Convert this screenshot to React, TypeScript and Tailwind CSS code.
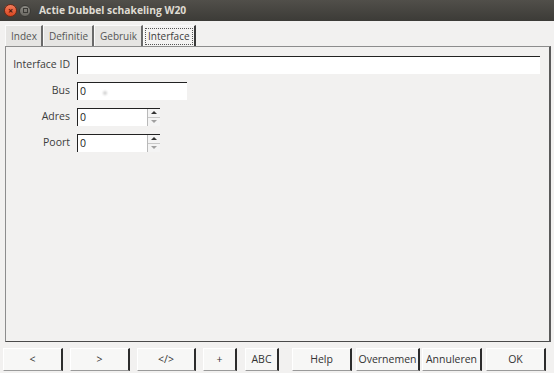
import React from "react";

const font = { fontFamily: '"Open Sans", "Noto Sans", sans-serif' };

function Spinner() {
  return (
    <div className="flex w-[13px] flex-col border-l border-[#b9b9b9] bg-[#f4f4f4]">
      <div className="flex h-1/2 items-center justify-center border-b border-[#c8c8c8]">
        <div className="h-0 w-0 border-x-[3px] border-b-[3px] border-x-transparent border-b-[#333]" />
      </div>
      <div className="flex h-1/2 items-center justify-center">
        <div className="h-0 w-0 border-x-[3px] border-t-[3px] border-x-transparent border-t-[#a0a0a0]" />
      </div>
    </div>
  );
}

function Field({ label, width, value, spin, dot }: { label: string; width: string; value?: string; spin?: boolean; dot?: boolean }) {
  return (
    <div className="flex h-[18px] items-center gap-[7px]">
      <div className="w-[64px] text-right text-[10.5px] text-[#3c3c3c]">{label}</div>
      <div className={`relative flex h-[18px] ${width} border-l border-t border-[#222] bg-white`}>
        <div className="flex-1 pl-[2px] text-[10.5px] leading-[17px] text-[#222]">{value}</div>
        {spin && <Spinner />}
        {dot && <div className="absolute left-[25px] top-[8px] h-[4px] w-[4px] rounded-full bg-[#cfcfcf] blur-[1px]" />}
      </div>
    </div>
  );
}

function Tab({ label, active }: { label: string; active?: boolean }) {
  if (active) {
    return (
      <div className="flex h-[21px] items-center border-l border-t border-[#fafafa] border-r-2 border-r-[#3a3a3a] bg-[#f4f3f2] px-[1px]">
        <div className="border border-dotted border-[#555] px-[2px] text-[10px] leading-[15px] text-[#3c3c3c]">{label}</div>
      </div>
    );
  }
  return (
    <div className="flex h-[21px] items-center border-l border-t border-[#fafafa] border-r-2 border-r-[#6a6a6a] bg-[#e6e5e3] pl-[5px] pr-[4px] text-[10px] text-[#555]">
      {label}
    </div>
  );
}

function Btn({ label, width }: { label: string; width: string }) {
  return (
    <div className={`flex h-[23px] ${width} items-center justify-center border-l border-t border-white border-r-2 border-b border-r-[#2c2c2c] border-b-[#9a9a9a] bg-[#f7f7f6] text-[10.5px] text-[#333]`}>
      {label}
    </div>
  );
}

export default function App() {
  return (
    <div className="flex h-[373px] w-[554px] flex-col overflow-hidden bg-[#f2f1f0]" style={font}>
      <div className="flex h-[21px] items-center bg-gradient-to-b from-[#514f4a] to-[#3c3b37] pl-[4px]">
        <div className="flex h-[13px] w-[13px] items-center justify-center rounded-full border border-[#6e2a16] bg-gradient-to-b from-[#f27b5a] to-[#d9461f] text-[9px] font-bold leading-none text-[#4a1407]">
          ×
        </div>
        <div className="ml-[2px] flex h-[12px] w-[12px] items-center justify-center rounded-full border border-[#3a3935] bg-gradient-to-b from-[#8c8a84] to-[#6a6862]">
          <div className="h-[5px] w-[5px] border border-[#3a3935]" />
        </div>
        <div className="ml-[8px] text-[10.3px] font-bold text-[#dfdbd2]">Actie Dubbel schakeling W20</div>
      </div>

      <div className="mt-[4px] flex items-end pl-[5px]">
        <Tab label="Index" />
        <Tab label="Definitie" />
        <Tab label="Gebruik" />
        <Tab label="Interface" active />
      </div>

      <div className="ml-[5px] flex h-[296px] w-[546px] flex-col gap-[8px] border-l border-t border-b border-[#8d8d8d] border-b-[#4a4a4a] border-r-2 border-r-[#5a5a5a] pt-[9px]">
        <Field label="Interface ID" width="w-[463px]" />
        <Field label="Bus" width="w-[110px]" value="0" dot />
        <Field label="Adres" width="w-[83px]" value="0" spin />
        <Field label="Poort" width="w-[83px]" value="0" spin />
      </div>

      <div className="mt-[6px] flex items-start pl-[3px]">
        <Btn label="<" width="w-[60px]" />
        <div className="w-[7px]" />
        <Btn label=">" width="w-[60px]" />
        <div className="w-[7px]" />
        <Btn label="</>" width="w-[59px]" />
        <div className="w-[7px]" />
        <Btn label="+" width="w-[34px]" />
        <div className="w-[8px]" />
        <Btn label="ABC" width="w-[34px]" />
        <div className="w-[13px]" />
        <Btn label="Help" width="w-[60px]" />
        <div className="w-[4px]" />
        <Btn label="Overnemen" width="w-[64px]" />
        <div className="w-[2px]" />
        <Btn label="Annuleren" width="w-[60px]" />
        <div className="w-[4px]" />
        <Btn label="OK" width="w-[60px]" />
      </div>
    </div>
  );
}
